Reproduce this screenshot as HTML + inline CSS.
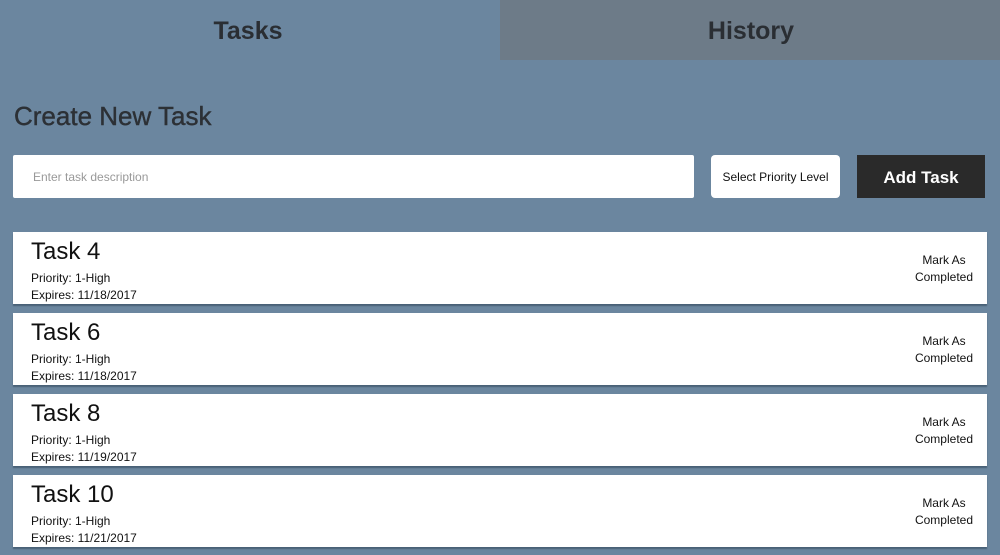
<!DOCTYPE html>
<html><head><style>
body{margin:0;width:1000px;height:555px;overflow:hidden;background:#6b869f;font-family:"Liberation Sans",Arial,sans-serif;}
.tab{position:absolute;top:0;height:60px;width:500px;text-align:center;line-height:62px;font-size:25px;font-weight:bold;color:#2a2e33}
h1{position:absolute;left:14px;top:101px;margin:0;font-size:26px;font-weight:normal;color:#2c3035;-webkit-text-stroke:0.4px #2c3035}
.in{position:absolute;left:13px;top:155px;width:681px;height:43px;background:#fff;border-radius:2px}
.in span{position:absolute;left:20px;top:15px;font-size:12px;color:#999}
.sel{position:absolute;left:711px;top:155px;width:129px;height:43px;background:#fff;border-radius:4px;font-size:12px;color:#111;text-align:center;line-height:44px}
.add{position:absolute;left:857px;top:155px;width:128px;height:43px;background:#2a2a2a;color:#fff;font-weight:bold;font-size:17px;text-align:center;line-height:45px}
.card{position:absolute;left:13px;width:974px;height:72px;background:#fff;box-shadow:0 2px 1px rgba(40,60,80,.5)}
.card .t{position:absolute;left:18px;top:6px;font-size:24px;color:#111}
.card .p{position:absolute;left:18px;top:38px;font-size:12px;line-height:17px;color:#111}
.card .m{position:absolute;right:14px;top:20px;font-size:12px;line-height:17px;color:#111;text-align:center}
</style></head><body>
<div class="tab" style="left:-2px">Tasks</div>
<div class="tab" style="left:500px;background:#6d7b88"><span style="margin-left:2px">History</span></div>
<h1>Create New Task</h1>
<div class="in"><span>Enter task description</span></div>
<div class="sel">Select Priority Level</div>
<div class="add">Add Task</div>
<div class="card" style="top:232px"><div class="t">Task 4</div><div class="p">Priority: 1-High<br>Expires: 11/18/2017</div><div class="m">Mark As<br>Completed</div></div>
<div class="card" style="top:313px"><div class="t">Task 6</div><div class="p">Priority: 1-High<br>Expires: 11/18/2017</div><div class="m">Mark As<br>Completed</div></div>
<div class="card" style="top:394px"><div class="t">Task 8</div><div class="p">Priority: 1-High<br>Expires: 11/19/2017</div><div class="m">Mark As<br>Completed</div></div>
<div class="card" style="top:475px"><div class="t">Task 10</div><div class="p">Priority: 1-High<br>Expires: 11/21/2017</div><div class="m">Mark As<br>Completed</div></div>
</body></html>
